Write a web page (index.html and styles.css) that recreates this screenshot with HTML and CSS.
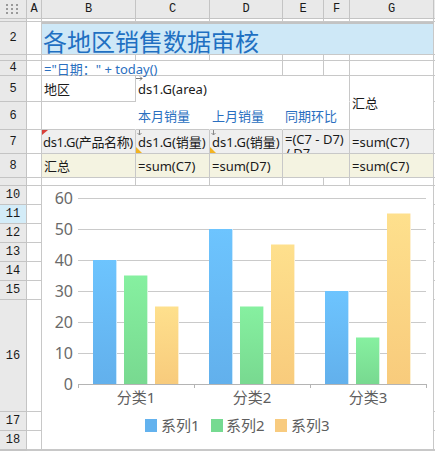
FILE: index.html
```html
<!DOCTYPE html>
<html>
	<head>
		<title>各地区销售数据审核</title>
		<link rel="stylesheet" href="styles.css">
	</head>
	<body>
		<div class="sheet">
			<!-- column headers -->
			<div class="ch corner">
				<svg width="13" height="10" viewBox="0 0 13 10">
					<g fill="#9a9a9a">
						<rect x="0" y="0" width="2" height="2"/><rect x="5" y="0" width="2" height="2"/><rect x="10" y="0" width="2" height="2"/>
						<rect x="0" y="4" width="2" height="2"/><rect x="5" y="4" width="2" height="2"/><rect x="10" y="4" width="2" height="2"/>
						<rect x="0" y="8" width="2" height="2"/><rect x="5" y="8" width="2" height="2"/><rect x="10" y="8" width="2" height="2"/>
					</g>
				</svg>
			</div>
			<div class="ch">A</div>
			<div class="ch">B</div>
			<div class="ch">C</div>
			<div class="ch">D</div>
			<div class="ch">E</div>
			<div class="ch">F</div>
			<div class="ch">G</div>
			<div class="ch"></div>

			<!-- row 1 -->
			<div class="rh"></div>
			<div class="c"></div><div class="c"></div><div class="c"></div><div class="c"></div>
			<div class="c"></div><div class="c"></div><div class="c"></div><div class="c"></div>

			<!-- row 2 -->
			<div class="rh">2</div>
			<div class="c"></div>
			<div class="c title span6">各地区销售数据审核</div>
			<div class="c"></div>

			<!-- row 3 -->
			<div class="rh"></div>
			<div class="c"></div><div class="c"></div><div class="c"></div><div class="c"></div>
			<div class="c"></div><div class="c"></div><div class="c"></div><div class="c"></div>

			<!-- row 4 -->
			<div class="rh">4</div>
			<div class="c"></div>
			<div class="c span3 blue formula">="日期：" + today()</div>
			<div class="c"></div><div class="c"></div><div class="c"></div><div class="c"></div>

			<!-- row 5 -->
			<div class="rh">5</div>
			<div class="c"></div>
			<div class="c">地区</div>
			<div class="c span4 no-bottom">
				<svg class="mark arrow-right" width="7" height="5" viewBox="0 0 7 5">
					<path d="M0 2.5 H6 M4 0.5 L6 2.5 L4 4.5" stroke="#777" fill="none"/>
				</svg>
				ds1.G(area)
			</div>
			<div class="c rspan2">汇总</div>
			<div class="c"></div>

			<!-- row 6 -->
			<div class="rh">6</div>
			<div class="c"></div>
			<div class="c no-right"></div>
			<div class="c no-right blue">本月销量</div>
			<div class="c no-right blue">上月销量</div>
			<div class="c no-right blue">同期环比</div>
			<div class="c"></div>
			<div class="c"></div>

			<!-- row 7 -->
			<div class="rh">7</div>
			<div class="c"></div>
			<div class="c grey tight">
				<svg class="mark flag" width="6" height="5" viewBox="0 0 6 5">
					<path d="M0 0 H6 L0 5 Z" fill="#d8403a"/>
				</svg>
				ds1.G(产品名称)
			</div>
			<div class="c grey">
				<svg class="mark arrow-down" width="5" height="6" viewBox="0 0 5 6">
					<path d="M2.5 0 V5 M0.5 3 L2.5 5 L4.5 3" stroke="#888" fill="none"/>
				</svg>
				<svg class="mark corner-tri" width="6" height="6" viewBox="0 0 6 6">
					<path d="M0 0 L6 6 H0 Z" fill="#f2b321"/>
				</svg>
				ds1.G(销量)
			</div>
			<div class="c grey">
				<svg class="mark arrow-down" width="5" height="6" viewBox="0 0 5 6">
					<path d="M2.5 0 V5 M0.5 3 L2.5 5 L4.5 3" stroke="#888" fill="none"/>
				</svg>
				<svg class="mark corner-tri" width="6" height="6" viewBox="0 0 6 6">
					<path d="M0 0 L6 6 H0 Z" fill="#f2b321"/>
				</svg>
				ds1.G(销量)
			</div>
			<div class="c grey span2 wrap">=(C7 - D7)<br>/ D7</div>
			<div class="c grey">=sum(C7)</div>
			<div class="c"></div>

			<!-- row 8 -->
			<div class="rh">8</div>
			<div class="c"></div>
			<div class="c beige">汇总</div>
			<div class="c beige">=sum(C7)</div>
			<div class="c beige">=sum(D7)</div>
			<div class="c beige span2"></div>
			<div class="c beige">=sum(C7)</div>
			<div class="c"></div>

			<!-- row 9 -->
			<div class="rh"></div>
			<div class="c"></div><div class="c"></div><div class="c"></div><div class="c"></div>
			<div class="c"></div><div class="c"></div><div class="c"></div><div class="c"></div>

			<!-- rows 10 - 18 with the chart -->
			<div class="rh">10</div>
			<div class="c"></div>
			<div class="c chart">
				<svg width="391" height="263" viewBox="0 0 391 263">
					<defs>
						<linearGradient id="gBlue" x1="0" y1="0" x2="0" y2="1">
							<stop offset="0" stop-color="#6dc4fe"/>
							<stop offset="1" stop-color="#62b0ec"/>
						</linearGradient>
						<linearGradient id="gGreen" x1="0" y1="0" x2="0" y2="1">
							<stop offset="0" stop-color="#86f0a0"/>
							<stop offset="1" stop-color="#78d990"/>
						</linearGradient>
						<linearGradient id="gYellow" x1="0" y1="0" x2="0" y2="1">
							<stop offset="0" stop-color="#fee08d"/>
							<stop offset="1" stop-color="#f8cb7c"/>
						</linearGradient>
					</defs>

					<g stroke="#cacaca" stroke-width="1">
						<line x1="36" y1="12.5" x2="384" y2="12.5"/>
						<line x1="36" y1="43.5" x2="384" y2="43.5"/>
						<line x1="36" y1="74.5" x2="384" y2="74.5"/>
						<line x1="36" y1="105.5" x2="384" y2="105.5"/>
						<line x1="36" y1="136.5" x2="384" y2="136.5"/>
						<line x1="36" y1="167.5" x2="384" y2="167.5"/>
					</g>

					<g class="axis-label" text-anchor="end">
						<text x="31" y="18">60</text>
						<text x="31" y="49">50</text>
						<text x="31" y="80">40</text>
						<text x="31" y="111">30</text>
						<text x="31" y="142">20</text>
						<text x="31" y="173">10</text>
						<text x="31" y="204">0</text>
					</g>

					<!-- 分类1 -->
					<rect x="51" y="74" width="23" height="124" fill="url(#gBlue)"/>
					<rect x="74" y="74" width="1" height="124" fill="#c9e8fd"/>
					<rect x="82" y="89.5" width="23" height="108.5" fill="url(#gGreen)"/>
					<rect x="105" y="89.5" width="1" height="108.5" fill="#d3f7dd"/>
					<rect x="113" y="120.5" width="23" height="77.5" fill="url(#gYellow)"/>
					<rect x="136" y="120.5" width="1" height="77.5" fill="#fdf0d2"/>

					<!-- 分类2 -->
					<rect x="167" y="43" width="23" height="155" fill="url(#gBlue)"/>
					<rect x="190" y="43" width="1" height="155" fill="#c9e8fd"/>
					<rect x="198" y="120.5" width="23" height="77.5" fill="url(#gGreen)"/>
					<rect x="221" y="120.5" width="1" height="77.5" fill="#d3f7dd"/>
					<rect x="229" y="58.5" width="23" height="139.5" fill="url(#gYellow)"/>
					<rect x="252" y="58.5" width="1" height="139.5" fill="#fdf0d2"/>

					<!-- 分类3 -->
					<rect x="283" y="105" width="23" height="93" fill="url(#gBlue)"/>
					<rect x="306" y="105" width="1" height="93" fill="#c9e8fd"/>
					<rect x="314" y="151.5" width="23" height="46.5" fill="url(#gGreen)"/>
					<rect x="337" y="151.5" width="1" height="46.5" fill="#d3f7dd"/>
					<rect x="345" y="27.5" width="23" height="170.5" fill="url(#gYellow)"/>
					<rect x="368" y="27.5" width="1" height="170.5" fill="#fdf0d2"/>

					<g stroke="#b4b4b4" stroke-width="1">
						<line x1="36" y1="198.5" x2="384" y2="198.5"/>
						<line x1="36.5" y1="198" x2="36.5" y2="202"/>
						<line x1="152.5" y1="198" x2="152.5" y2="202"/>
						<line x1="268.5" y1="198" x2="268.5" y2="202"/>
						<line x1="384.5" y1="198" x2="384.5" y2="202"/>
					</g>

					<g class="cat-label" text-anchor="middle">
						<text x="94" y="217">分类1</text>
						<text x="210" y="217">分类2</text>
						<text x="326" y="217">分类3</text>
					</g>

					<g class="legend">
						<rect x="103" y="233" width="12" height="13" fill="#63b2ee"/>
						<text x="119" y="245">系列1</text>
						<rect x="169" y="233" width="12" height="13" fill="#76da91"/>
						<text x="184" y="245">系列2</text>
						<rect x="233" y="233" width="12" height="13" fill="#f8cb7f"/>
						<text x="249" y="245">系列3</text>
					</g>
				</svg>
			</div>
			<div class="c"></div>

			<div class="rh selected">11</div><div class="c"></div><div class="c"></div>
			<div class="rh">12</div><div class="c"></div><div class="c"></div>
			<div class="rh">13</div><div class="c"></div><div class="c"></div>
			<div class="rh">14</div><div class="c"></div><div class="c"></div>
			<div class="rh">15</div><div class="c"></div><div class="c"></div>
			<div class="rh">16</div><div class="c"></div><div class="c"></div>
			<div class="rh">17</div><div class="c"></div><div class="c"></div>
			<div class="rh">18</div><div class="c"></div><div class="c"></div>

			<!-- row 19, cut off -->
			<div class="rh"></div>
			<div class="c"></div><div class="c"></div><div class="c"></div><div class="c"></div>
			<div class="c"></div><div class="c"></div><div class="c"></div><div class="c"></div>
		</div>
	</body>
</html>
```

FILE: styles.css
```css
body{
	margin: 0;
	background: #fff;
	font-family: "Noto Sans", "Noto Sans CJK SC", sans-serif;
	font-size: 13px;
	color: #1a1a1a;
	overflow: hidden;
}
.sheet{
	display: grid;
	width: 435px;
	height: 451px;
	grid-template-columns: 27px 15px 94px 74px 73px 41px 26px 84px 1fr;
	grid-template-rows: 19px 3px 33px 6px 15px 26px 28px 24px 24px 8px repeat(6, 19px) 112px 19px 19px 1fr;
}

/* headers */
.ch, .rh{
	box-sizing: border-box;
	background: #e9e9e9;
	border-right: 1px solid #c4c4c4;
	border-bottom: 1px solid #c4c4c4;
	display: flex;
	align-items: center;
	justify-content: center;
	font-family: "Liberation Mono", monospace;
	font-size: 12px;
	color: #1a1a1a;
	overflow: hidden;
}
.corner svg{
	margin-left: -1px;
}
.rh.selected{
	background: #d3ecf8;
}

/* cells */
.c{
	box-sizing: border-box;
	border-right: 1px solid #c8c8c8;
	border-bottom: 1px solid #c8c8c8;
	display: flex;
	align-items: center;
	padding-left: 2px;
	white-space: nowrap;
	min-width: 0;
	position: relative;
}
.span2{
	grid-column: span 2;
}
.span3{
	grid-column: span 3;
}
.span4{
	grid-column: span 4;
}
.span6{
	grid-column: span 6;
}
.rspan2{
	grid-row: span 2;
}
.no-bottom{
	border-bottom-color: #fff;
}
.no-right{
	border-right-color: #fff;
}
.tight{
	padding-left: 1px;
	letter-spacing: -0.35px;
}
.blue{
	color: #2a6fc0;
}
.grey{
	background: #efefef;
}
.beige{
	background: #f4f3e1;
}

.title{
	background: #cee8f7;
	border-top: 2px solid #c3c3c3;
	padding-left: 1px;
	padding-top: 5px;
	font-size: 24px;
	line-height: 26px;
	color: #1f70c2;
}
.formula{
	line-height: 14px;
	padding-top: 1px;
}
.wrap{
	display: block;
	overflow: hidden;
	line-height: 14px;
	padding-top: 2px;
}

/* small markers over the cells */
.mark{
	position: absolute;
	display: block;
}
.arrow-right{
	left: 0;
	top: 0;
}
.arrow-down{
	left: 1px;
	top: 0;
}
.corner-tri{
	left: 0;
	bottom: 0;
}
.flag{
	left: 0;
	top: 0;
}

/* chart */
.chart{
	grid-column: span 6;
	grid-row: span 9;
	padding: 0;
	align-items: flex-start;
	background: #fff;
}
.chart svg{
	display: block;
}
.axis-label{
	font-family: "Noto Sans", "Noto Sans CJK SC", sans-serif;
	font-size: 16px;
	fill: #6a6a6a;
}
.cat-label, .legend text{
	font-family: "Noto Sans", "Noto Sans CJK SC", sans-serif;
	font-size: 15px;
	fill: #5e5e5e;
}
```
